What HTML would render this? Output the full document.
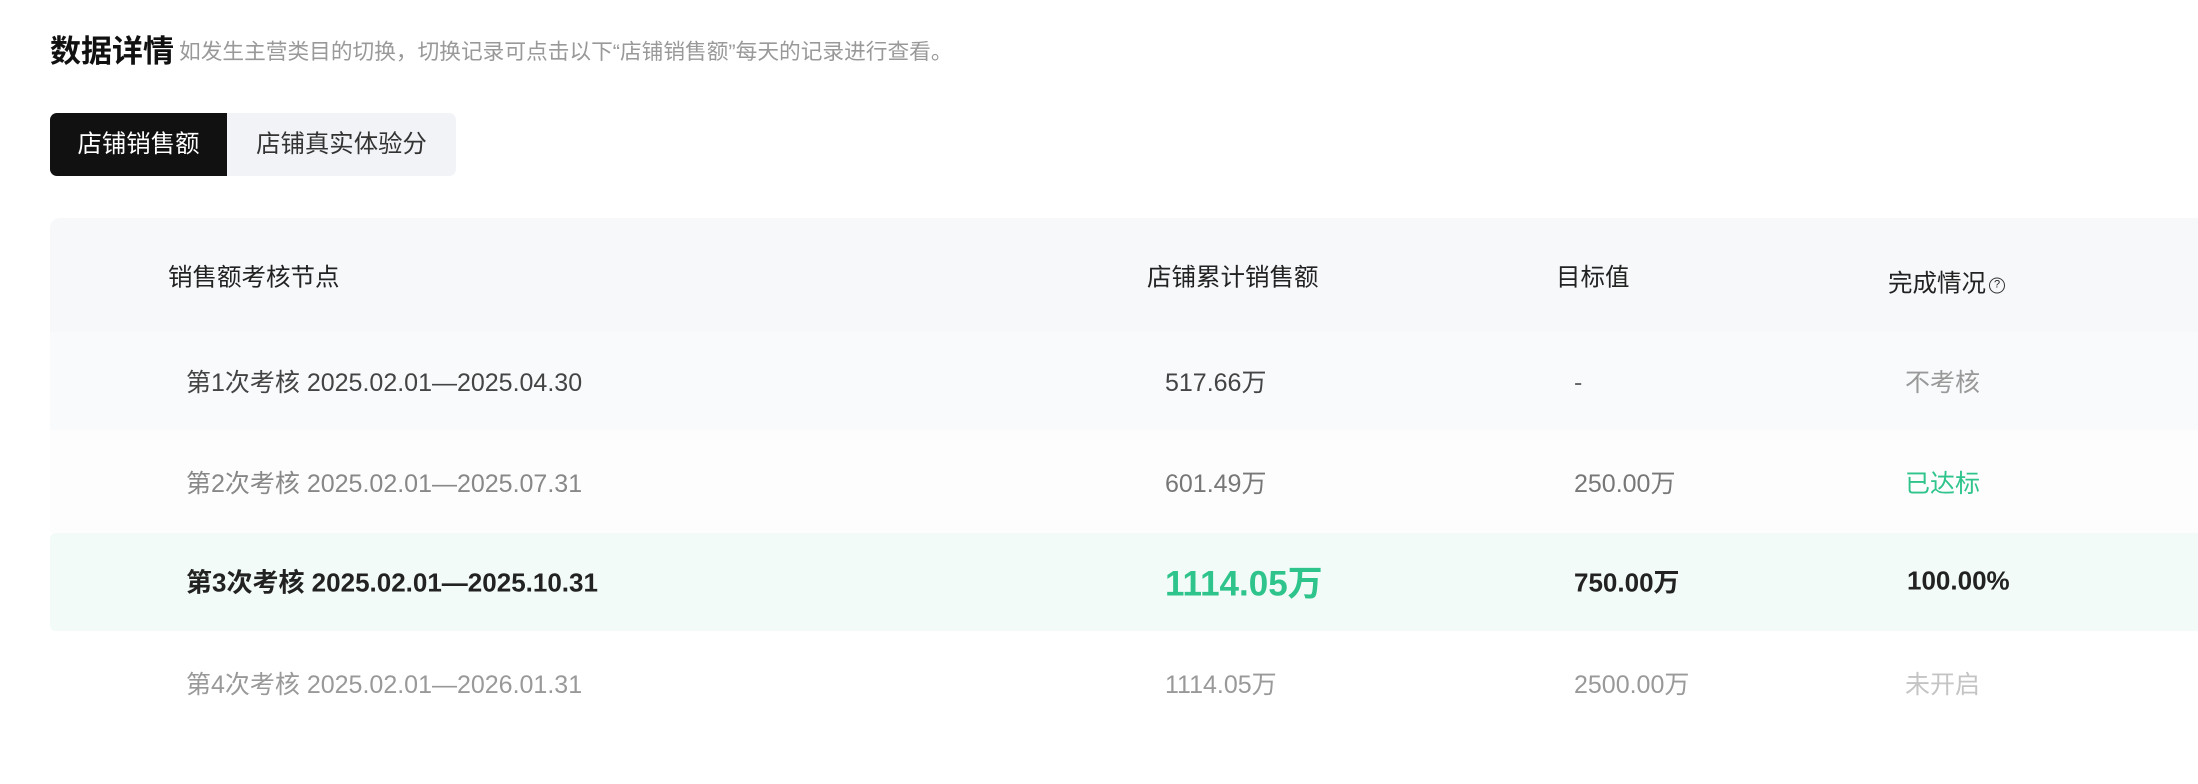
<!DOCTYPE html>
<html><head><meta charset="utf-8"><style>
*{margin:0;padding:0;box-sizing:border-box}
body{width:2198px;height:784px;background:#fff;font-family:"Liberation Sans","Noto Sans CJK SC",sans-serif;position:relative;overflow:hidden;color:#222}
.abs{position:absolute;white-space:nowrap}
.title{left:50px;top:26px;font-size:31px;font-weight:bold;color:#111}
.sub{left:179px;top:35px;font-size:21.7px;color:#999}
.tabs{left:50px;top:113px;width:406px;height:63px;background:#f2f3f7;border-radius:7px}
.tab1{left:50px;top:113px;width:177px;height:63px;background:#111;color:#fff;border-radius:7px 0 0 7px;font-size:24.4px;line-height:63px;text-align:center}
.tab2{left:227px;top:113px;width:229px;height:63px;color:#333;font-size:24.4px;line-height:63px;text-align:center}
.row{position:absolute;left:50px;width:2160px}
.c{position:absolute;transform:translateY(-50%);white-space:nowrap;font-size:25px}
.h{font-size:24.5px;color:#222}
.b{font-weight:bold;font-size:26px;color:#222}
</style></head><body>
<div class="abs title">数据详情</div>
<div class="abs sub">如发生主营类目的切换，切换记录可点击以下“店铺销售额”每天的记录进行查看。</div>
<div class="abs tabs"></div>
<div class="abs tab1">店铺销售额</div>
<div class="abs tab2">店铺真实体验分</div>

<div class="row" style="top:218px;height:114px;background:#f7f8fa;border-radius:10px 10px 0 0"></div>
<div class="row" style="top:332px;height:98px;background:#f9fafc"></div>
<div class="row" style="top:430px;height:103px;background:#fdfdfd"></div>
<div class="row" style="top:533px;height:98px;background:#f2fbf7;border-radius:6px"></div>

<div class="c h" style="left:168px;top:276px">销售额考核节点</div>
<div class="c h" style="left:1147px;top:276px">店铺累计销售额</div>
<div class="c h" style="left:1556px;top:276px">目标值</div>
<div class="c h" style="left:1888px;top:282px">完成情况<span style="display:inline-block;width:16px;height:16px;border:1.5px solid #333;border-radius:50%;font-size:11px;line-height:13px;text-align:center;vertical-align:middle;margin-left:3px">?</span></div>

<div class="c" style="left:186px;top:381px;color:#444">第1次考核 2025.02.01—2025.04.30</div>
<div class="c" style="left:1165px;top:381px;color:#444">517.66万</div>
<div class="c" style="left:1574px;top:383px;color:#666">-</div>
<div class="c" style="left:1905px;top:381px;color:#999">不考核</div>

<div class="c" style="left:186px;top:482px;color:#888">第2次考核 2025.02.01—2025.07.31</div>
<div class="c" style="left:1165px;top:482px;color:#777">601.49万</div>
<div class="c" style="left:1574px;top:482px;color:#777">250.00万</div>
<div class="c" style="left:1905px;top:482px;color:#2ec48c">已达标</div>

<div class="c b" style="left:186px;top:581px">第3次考核 2025.02.01—2025.10.31</div>
<div class="c" style="left:1165px;top:581px;color:#2ec48c;font-weight:bold;font-size:35px">1114.05万</div>
<div class="c b" style="left:1574px;top:581px">750.00万</div>
<div class="c b" style="left:1907px;top:581px">100.00%</div>

<div class="c" style="left:186px;top:683px;color:#999">第4次考核 2025.02.01—2026.01.31</div>
<div class="c" style="left:1165px;top:683px;color:#999">1114.05万</div>
<div class="c" style="left:1574px;top:683px;color:#999">2500.00万</div>
<div class="c" style="left:1905px;top:683px;color:#c4c4c4">未开启</div>
</body></html>
